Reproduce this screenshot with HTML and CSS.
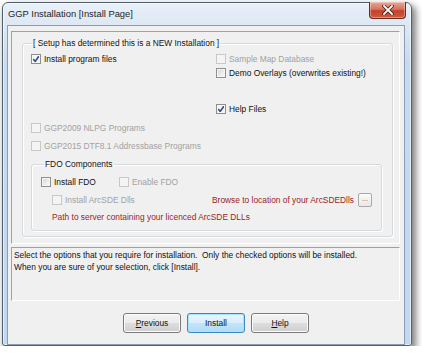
FILE: index.html
```html
<!DOCTYPE html>
<html lang="en">
<head>
  <meta charset="UTF-8" />
  <title>GGP Installation [Install Page]</title>
  <link rel="stylesheet" href="styles.css">
</head>
<body>

  <div class="window">
    <div class="titlebar">
      <span class="title">GGP Installation [Install Page]</span>
      <span class="close">
        <svg width="12" height="10" viewBox="0 0 12 10">
          <path d="M2 1 L10 9 M10 1 L2 9" stroke="#4a1c14" stroke-width="3.4" stroke-linecap="square"/>
          <path d="M2 1 L10 9 M10 1 L2 9" stroke="#fff" stroke-width="1.8" stroke-linecap="square"/>
        </svg>
      </span>
    </div>

    <div class="client">
      <div class="panel upper">
        <fieldset class="group main">
          <legend>[ Setup has determined this is a NEW Installation ]</legend>

          <div class="cols">
            <div class="col-left">
              <label class="chk"><span class="box checked"></span>Install program files</label>
            </div>
            <div class="col-right">
              <label class="chk disabled"><span class="box"></span>Sample Map Database</label>
              <label class="chk"><span class="box"></span>Demo Overlays (overwrites existing!)</label>
              <label class="chk help"><span class="box checked"></span>Help Files</label>
            </div>
          </div>

          <label class="chk disabled nlpg"><span class="box"></span>GGP2009 NLPG Programs</label>
          <label class="chk disabled dtf"><span class="box"></span>GGP2015 DTF8.1 Addressbase Programs</label>

          <fieldset class="group fdo">
            <legend>FDO Components</legend>
            <div class="fdo-row">
              <label class="chk fdo-install"><span class="box"></span>Install FDO</label>
              <label class="chk disabled"><span class="box"></span>Enable FDO</label>
            </div>
            <div class="fdo-row arcsde">
              <label class="chk disabled"><span class="box"></span>Install ArcSDE Dlls</label>
              <span class="red browse">Browse to location of your ArcSDEDlls</span>
              <span class="dots">...</span>
            </div>
            <div class="red path">Path to server containing your licenced ArcSDE DLLs</div>
          </fieldset>
        </fieldset>
      </div>

      <div class="panel lower">
        Select the options that you require for installation.&nbsp; Only the checked options will be installed.<br>
        When you are sure of your selection, click [Install].
      </div>

      <div class="buttons">
        <button type="button"><u>P</u>revious</button>
        <button type="button" class="default">Install</button>
        <button type="button"><u>H</u>elp</button>
      </div>
    </div>
  </div>

</body>
</html>
```

FILE: styles.css
```css
body {
  margin: 0;
  background: #fff;
  font-family: "Liberation Sans", Arial, sans-serif;
  font-size: 8.4px;
  color: #111;
}

.window {
  margin: 2px 0 0 2px;
  width: 408px;
  height: 342px;
  border: 1px solid #50606f;
  border-radius: 6px 6px 3px 3px;
  background: linear-gradient(#e9f0f8 0, #dde8f4 22px, #c6daf0 60px, #c2d8f0 100%);
  box-shadow: inset 0 0 0 1px rgba(255,255,255,0.55), 3px 4px 7px 1px rgba(0,0,0,0.5);
}

.titlebar {
  display: flex;
  height: 22px;
}

.title {
  flex: 1;
  padding: 5px 0 0 5px;
  font-size: 9.4px;
  line-height: 12px;
  color: #1e1e1e;
}

.close {
  display: flex;
  align-items: center;
  justify-content: center;
  width: 35px;
  height: 16px;
  margin: -1px 5px 0 0;
  border: 1px solid #6b2a1e;
  border-top: none;
  border-radius: 0 0 4px 4px;
  background: linear-gradient(#e9a797 0, #d7735f 45%, #c4422b 55%, #cf5a3e 100%);
  box-shadow: inset 0 0 0 1px rgba(255,255,255,0.35);
}

.client {
  width: 396px;
  height: 313px;
  margin-left: 4px;
  border: 1px solid #8a9db5;
  background: #f0f0f0;
  padding-top: 5px;
  box-sizing: content-box;
}

.panel {
  margin: 0 4px 0 3px;
  border: 1px solid;
  border-color: #a0a0a0 #fff #fff #a0a0a0;
  box-sizing: border-box;
}

.upper {
  height: 213px;
  padding-top: 5px;
}

.group {
  margin: 0;
  border: 1px solid #d5dadf;
  border-radius: 3px;
  box-shadow: inset 1px 1px 0 #fff, 1px 1px 0 #fff;
  padding: 0;
}

.group legend {
  line-height: 12px;
  padding: 0 1px;
}

.main {
  margin: 0 6px 0 10px;
  height: 200px;
  padding: 3px 0 0 8px;
  box-sizing: border-box;
}

.main legend {
  margin-left: 1px;
}

.cols {
  display: flex;
}

.col-left {
  width: 185px;
}

.chk {
  display: flex;
  align-items: center;
  gap: 3px;
  height: 14px;
  line-height: 14px;
  white-space: nowrap;
}

.chk.disabled {
  color: #a2a2a2;
}

.box {
  width: 8px;
  height: 8px;
  border: 1px solid #8e8f8f;
  background: linear-gradient(135deg, #d6d6d6, #f4f4f4 80%);
  box-shadow: inset 0 0 0 1px #f6f6f6;
  flex: none;
}

.disabled .box {
  border-color: #c8c8c8;
  background: #f4f4f4;
  box-shadow: none;
}

.box.checked {
  background: #f4f4f4 url("data:image/svg+xml,%3Csvg xmlns='http://www.w3.org/2000/svg' width='8' height='8'%3E%3Cpath d='M1.2 4 L3.2 6.5 L7 1' fill='none' stroke='%23324c8c' stroke-width='1.6'/%3E%3C/svg%3E") no-repeat center;
}

.help {
  margin-top: 22px;
}

.nlpg {
  margin-top: 5px;
}

.dtf {
  margin-top: 4px;
}

.fdo {
  margin: 5px 10px 0 0;
  padding: 5px 9px 6px 9px;
}

.fdo legend {
  margin-left: 3px;
}

.fdo-row {
  display: flex;
  align-items: center;
}

.fdo-install {
  width: 78px;
}

.arcsde {
  margin-top: 4px;
  padding-left: 11px;
}

.red {
  color: #9a1e1e;
}

.browse {
  margin-left: auto;
  line-height: 14px;
}

.dots {
  width: 12px;
  height: 12px;
  margin-left: 4px;
  border: 1px solid #a9a9a9;
  border-radius: 2px;
  background: linear-gradient(#fbfbfb, #e8e8e8);
  font-size: 7px;
  line-height: 10px;
  text-align: center;
  color: #555;
}

.path {
  margin: 3px 0 0 11px;
  line-height: 14px;
}

.lower {
  height: 54px;
  margin-top: 3px;
  padding: 1px 2px;
  line-height: 12px;
}

.buttons {
  display: flex;
  gap: 6px;
  padding: 12px 0 0 115px;
}

button {
  width: 58px;
  height: 20px;
  padding: 0;
  border: 1px solid #7a7a7a;
  border-radius: 3px;
  background: linear-gradient(#f3f3f3 0, #ebebeb 48%, #dddddd 52%, #cfcfcf 100%);
  box-shadow: inset 0 0 0 1px #fbfbfb;
  font-family: "Liberation Sans", Arial, sans-serif;
  font-size: 8.4px;
  color: #111;
}

button.default {
  border-color: #3a87c6;
  background: linear-gradient(#eaf5fc 0, #d9eefb 48%, #c2e4f8 52%, #b2dcf5 100%);
  box-shadow: inset 0 0 0 1px #a8e3fd;
}
```
